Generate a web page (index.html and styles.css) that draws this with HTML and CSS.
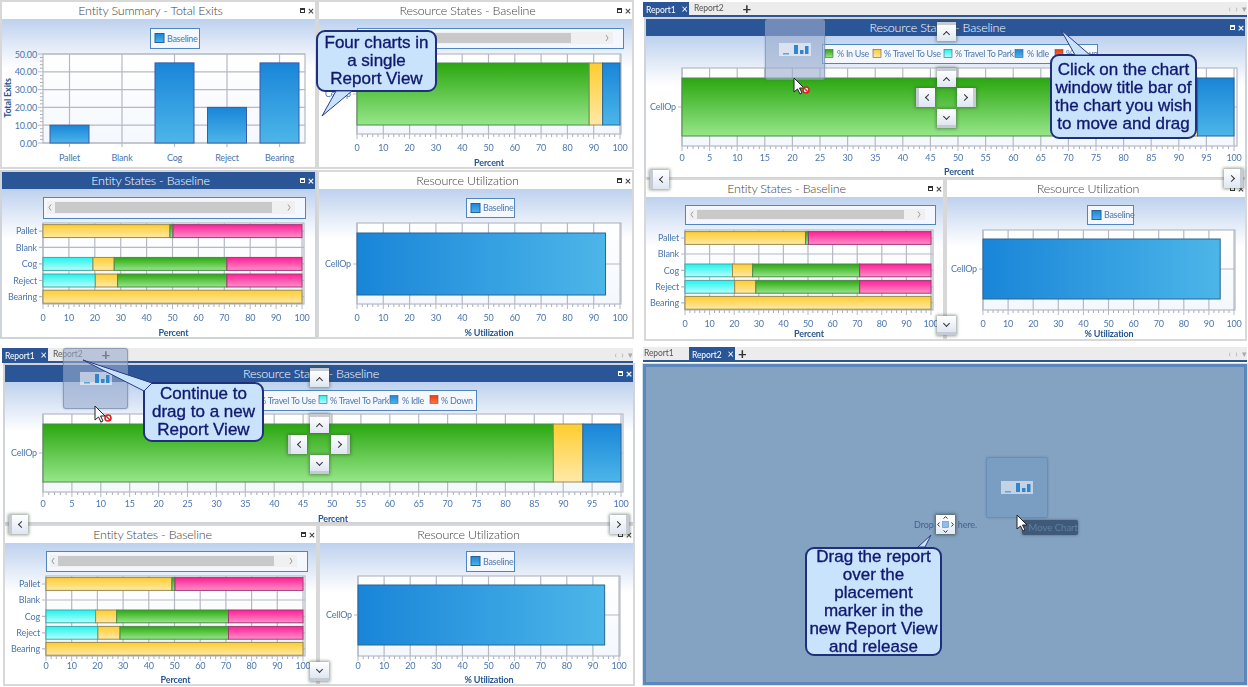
FILE: index.html
```html
<!DOCTYPE html>
<html lang="en">
<head>
  <meta charset="UTF-8" />
  <title>Moving a chart to a new Report View</title>
  <link rel="stylesheet" href="styles.css">
</head>
<body>
  <main class="sheet">

    <div class="quad quad-a">
      <section class="panel">
        <header class="panel-title">Entity Summary - Total Exits<span class="panel-btns"><i class="pin"></i><b>×</b></span></header>
        <div class="panel-body" data-chart="summary"></div>
      </section>
      <section class="panel">
        <header class="panel-title">Resource States - Baseline<span class="panel-btns"><i class="pin"></i><b>×</b></span></header>
        <div class="panel-body" data-chart="resA"></div>
      </section>
      <section class="panel active">
        <header class="panel-title">Entity States - Baseline<span class="panel-btns"><i class="pin"></i><b>×</b></span></header>
        <div class="panel-body" data-chart="entA"></div>
      </section>
      <section class="panel">
        <header class="panel-title">Resource Utilization<span class="panel-btns"><i class="pin"></i><b>×</b></span></header>
        <div class="panel-body" data-chart="utilA"></div>
      </section>
    </div>

    <div class="quad quad-b">
      <nav class="tabs">
        <span class="tab current">Report1<b>×</b></span>
        <span class="tab">Report2</span>
        <span class="tab-add">+</span>
        <span class="tab-arrows">‹ &nbsp;› &nbsp;▾</span>
      </nav>
      <div class="views">
        <section class="panel active wide">
          <header class="panel-title">Resource States - Baseline<span class="panel-btns"><i class="pin"></i><b>×</b></span></header>
          <div class="panel-body" data-chart="resB"></div>
        </section>
        <section class="panel">
          <header class="panel-title">Entity States - Baseline<span class="panel-btns"><i class="pin"></i><b>×</b></span></header>
          <div class="panel-body" data-chart="entB"></div>
        </section>
        <section class="panel">
          <header class="panel-title">Resource Utilization<span class="panel-btns"><i class="pin"></i><b>×</b></span></header>
          <div class="panel-body" data-chart="utilB"></div>
        </section>
      </div>
    </div>

    <div class="quad quad-c">
      <nav class="tabs">
        <span class="tab current">Report1<b>×</b></span>
        <span class="tab">Report2</span>
        <span class="tab-add">+</span>
        <span class="tab-arrows">‹ &nbsp;› &nbsp;▾</span>
      </nav>
      <div class="views">
        <section class="panel active wide">
          <header class="panel-title">Resource States - Baseline<span class="panel-btns"><i class="pin"></i><b>×</b></span></header>
          <div class="panel-body" data-chart="resC"></div>
        </section>
        <section class="panel">
          <header class="panel-title">Entity States - Baseline<span class="panel-btns"><i class="pin"></i><b>×</b></span></header>
          <div class="panel-body" data-chart="entC"></div>
        </section>
        <section class="panel">
          <header class="panel-title">Resource Utilization<span class="panel-btns"><i class="pin"></i><b>×</b></span></header>
          <div class="panel-body" data-chart="utilC"></div>
        </section>
      </div>
    </div>

    <div class="quad quad-d">
      <nav class="tabs">
        <span class="tab plain">Report1</span>
        <span class="tab current">Report2<b>×</b></span>
        <span class="tab-add">+</span>
        <span class="tab-arrows">‹ &nbsp;› &nbsp;▾</span>
      </nav>
      <div class="drop-area"></div>
    </div>

    <!-- things floating over the reports, in page coordinates -->
    <div class="dock up d1"></div>
    <div class="dock up d2"></div>
    <div class="dock left d3"></div>
    <div class="dock right d4"></div>
    <div class="dock down d5"></div>
    <div class="dock down d6"></div>
    <div class="dock left d7"></div>
    <div class="dock right d8"></div>

    <div class="dock up e1"></div>
    <div class="dock up e2"></div>
    <div class="dock left e3"></div>
    <div class="dock right e4"></div>
    <div class="dock down e5"></div>
    <div class="dock down e6"></div>
    <div class="dock left e7"></div>
    <div class="dock right e8"></div>

    <div class="ghost ghost-b" data-thumb></div>
    <div class="ghost ghost-c" data-thumb></div>
    <div class="ghost ghost-d" data-thumb></div>

    <span class="drop-text">Drop chart here.</span>
    <div class="drop-mark">
      <svg viewBox="0 0 19 19" width="19" height="19">
        <rect x="6.5" y="6.5" width="6" height="6" fill="#8fbdf0" stroke="#5b87c0" stroke-width=".6"/>
        <path d="M7.5 3.5l2-1.8 2 1.8M7.5 15.500l2 1.800 2-1.800M3.500 7.500l-1.800 2 1.800 2M15.500 7.500l1.800 2-1.800 2" fill="none" stroke="#333" stroke-width="1"/>
      </svg>
    </div>
    <div class="move-tip">
      <svg viewBox="0 0 8 8" width="8" height="8"><circle cx="4" cy="4" r="4" fill="#2f6fc4"/><path d="M1.500 4h4M4 2l2 2-2 2" fill="none" stroke="#cfe0f5" stroke-width="1"/></svg>
      Move Chart
    </div>

    <svg class="pointer p-b" viewBox="0 0 12 18" width="12" height="18"><path d="M1 1v14l3.500-3 2.500 5 2-1-2.500-5H11z" fill="#fff" stroke="#222" stroke-width="1"/></svg>
    <svg class="pointer p-c" viewBox="0 0 12 18" width="12" height="18"><path d="M1 1v14l3.500-3 2.500 5 2-1-2.500-5H11z" fill="#fff" stroke="#222" stroke-width="1"/></svg>
    <svg class="pointer p-d" viewBox="0 0 12 18" width="12" height="18"><path d="M1 1v14l3.500-3 2.500 5 2-1-2.500-5H11z" fill="#fff" stroke="#222" stroke-width="1"/></svg>
    <svg class="nodrop n-b" viewBox="0 0 8 8" width="8" height="8"><circle cx="4" cy="4" r="3" fill="#fff" stroke="#d22" stroke-width="1.600"/><path d="M2 2l4 4" stroke="#d22" stroke-width="1.400"/></svg>
    <svg class="nodrop n-c" viewBox="0 0 8 8" width="8" height="8"><circle cx="4" cy="4" r="3" fill="#fff" stroke="#d22" stroke-width="1.600"/><path d="M2 2l4 4" stroke="#d22" stroke-width="1.400"/></svg>

    <div class="callout c-four">Four charts in<br>a single<br>Report View</div>
    <div class="callout c-click">Click on the chart<br>window title bar of<br>the chart you wish<br>to move and drag</div>
    <div class="callout c-drag">Continue to<br>drag to a new<br>Report View</div>
    <div class="callout c-drop">Drag the report<br>over the<br>placement<br>marker in the<br>new Report View<br>and release</div>

    <svg class="tails" viewBox="0 0 1248 687" width="1248" height="687">
      <g>
        <path d="M336 91L322 116L352 91z"/>
        <path d="M1075 55L1061 30L1090 55z"/>
        <path d="M144 391L83 360L152 383z"/>
        <path d="M918 547L931 535L925 547z"/>
      </g>
    </svg>
  </main>

  <script src="app.js"></script>
</body>
</html>
```

FILE: styles.css
```css
html, body {
  margin: 0;
  padding: 0;
  background: #fff;
}
.sheet {
  position: relative;
  width: 1248px;
  height: 687px;
  overflow: hidden;
  display: grid;
  grid-template-columns: 640px 608px;
  grid-template-rows: 345px 342px;
  font-family: Lato, "Open Sans", sans-serif;
  filter: blur(0.3px);
}
.quad {
  box-sizing: border-box;
  min-width: 0;
  min-height: 0;
}
.quad-a {
  padding: 2px 0 0 2px;
  display: grid;
  grid-template-columns: 313px 313px;
  grid-template-rows: 165px 165px;
  column-gap: 4px;
  row-gap: 5px;
}
.quad-b {
  padding: 2px 1px 0 3px;
}
.quad-b .views {
  margin: 2px 2px 0 3px;
  display: grid;
  grid-template-columns: 297px 298px;
  grid-template-rows: 158px 159px;
  column-gap: 4px;
  row-gap: 3px;
}
.quad-c {
  padding: 3px 7px 0 2px;
}
.quad-c .views {
  margin: 2px 0 0 3px;
  display: grid;
  grid-template-columns: 311px 313px;
  grid-template-rows: 157px 158px;
  column-gap: 4px;
  row-gap: 4px;
}
.quad-d {
  padding: 2px 1px 0 3px;
}
.wide {
  grid-column: 1 / 3;
}

/* chart windows */
.panel {
  outline: 2px solid #d8d8d8;
  background: #fff;
  display: flex;
  flex-direction: column;
  min-width: 0;
  min-height: 0;
}
.panel-title {
  position: relative;
  flex: none;
  box-sizing: border-box;
  height: 17px;
  padding-right: 16px;
  line-height: 17px;
  text-align: center;
  font-size: 12.5px;
  letter-spacing: -0.2px;
  font-weight: 300;
  color: #444;
  background: #fff;
}
.panel.active {
  outline-color: #cfd3da;
}
.panel.active .panel-title {
  background: #2a5698;
  color: #fff;
}
.panel-btns {
  position: absolute;
  right: 1px;
  top: 0;
  height: 17px;
  display: flex;
  align-items: center;
  gap: 3px;
}
.panel-btns b {
  font-size: 11px;
  line-height: 11px;
  font-weight: 700;
}
.panel-btns .pin {
  display: block;
  box-sizing: border-box;
  width: 5px;
  height: 5px;
  border: 1px solid #333;
  border-top-width: 2px;
}
.panel.active .panel-btns .pin {
  border-color: #fff;
}
.panel-body {
  flex: 1;
  min-height: 0;
  background: linear-gradient(#bdd1ee, #eef3fb 36px, #fff 50px, #fff);
}
.panel-body svg {
  display: block;
  width: 100%;
  height: 100%;
}
.panel-body text {
  font-family: Lato, "Open Sans", sans-serif;
  font-size: 9px;
  letter-spacing: -0.15px;
  fill: #4a76ad;
}
.panel-body text.ax-title {
  font-weight: 700;
  fill: #26558f;
}
.panel-body text.legend-text {
  letter-spacing: -0.3px;
  fill: #4f78ab;
}

/* report tabs */
.tabs {
  position: relative;
  height: 13px;
  background: #ececec;
  border-bottom: 2px solid #2a5698;
  display: flex;
  align-items: stretch;
  font-size: 8.5px;
  letter-spacing: -0.1px;
  line-height: 13px;
  color: #555;
}
.tab {
  padding: 0 3px 0 4px;
}
.tab.current {
  box-sizing: border-box;
  width: 46px;
  padding-left: 3px;
  margin-right: 1px;
  background: #2a5698;
  color: #fff;
  white-space: nowrap;
}
.tab.plain {
  width: 36px;
  padding-left: 1px;
  margin-right: 6px;
}
.tab b {
  margin-left: 6px;
  font-size: 11px;
  font-weight: 400;
}
.tab-add {
  margin-left: 16px;
  font-size: 15px;
  font-weight: 700;
  line-height: 12px;
  color: #333;
}
.quad-d .tab-add {
  margin-left: 2px;
}
.tab-arrows {
  position: absolute;
  right: 0;
  top: 0;
  color: #aaa;
  font-size: 9px;
}
.drop-area {
  box-sizing: border-box;
  margin-top: 2px;
  height: 321px;
  background: #84a2c1;
  border: 3px solid #5c87bc;
  box-shadow: 0 0 0 1px #d5e0ee;
}

/* dock arrows */
.dock {
  position: absolute;
  box-sizing: border-box;
  width: 19px;
  height: 19px;
  background: linear-gradient(#fff, #dfe6f2);
  box-shadow: 0 0 3px 1px rgba(60, 80, 60, 0.55);
  border: 0 solid #c5cad3;
  display: flex;
  align-items: center;
  justify-content: center;
}
.dock::after {
  content: "";
  width: 4px;
  height: 4px;
  border: solid #333;
  border-width: 1.5px 0 0 1.5px;
}
.dock.up { border-top-width: 3px; }
.dock.down { border-bottom-width: 3px; }
.dock.left { border-left-width: 3px; }
.dock.right { border-right-width: 3px; }
.dock.up::after { transform: translateY(1px) rotate(45deg); }
.dock.down::after { transform: translateY(-1px) rotate(225deg); }
.dock.left::after { transform: translateX(1px) rotate(-45deg); }
.dock.right::after { transform: translateX(-1px) rotate(135deg); }

.d1 { left: 937px; top: 22px; }
.d2 { left: 937px; top: 68px; }
.d3 { left: 916px; top: 88px; }
.d4 { left: 957px; top: 88px; }
.d5 { left: 937px; top: 109px; }
.d6 { left: 937px; top: 316px; }
.d7 { left: 650px; top: 170px; }
.d8 { left: 1224px; top: 169px; }

.e1 { left: 310px; top: 368px; }
.e2 { left: 310px; top: 414px; }
.e3 { left: 288px; top: 435px; }
.e4 { left: 331px; top: 435px; }
.e5 { left: 310px; top: 455px; }
.e6 { left: 310px; top: 662px; }
.e7 { left: 9px; top: 515px; }
.e8 { left: 610px; top: 515px; }

/* drag preview */
.ghost {
  position: absolute;
  box-sizing: border-box;
  border-radius: 3px;
  display: flex;
  align-items: center;
  justify-content: center;
  box-shadow: 0 0 2px rgba(70, 90, 120, 0.4);
}
.ghost-b {
  left: 765px;
  top: 19px;
  width: 60px;
  height: 61px;
  background: rgba(155, 172, 205, 0.62);
  border: 1px solid rgba(120, 140, 170, 0.6);
}
.ghost-c {
  left: 63px;
  top: 348px;
  width: 65px;
  height: 61px;
  background: rgba(155, 172, 205, 0.6);
  border: 1px solid rgba(110, 130, 160, 0.6);
}
.ghost-d {
  left: 986px;
  top: 457px;
  width: 62px;
  height: 61px;
  background: rgba(110, 150, 195, 0.45);
  border: 1px solid rgba(100, 135, 180, 0.7);
}
.pointer {
  position: absolute;
}
.p-b { left: 793px; top: 77px; }
.p-c { left: 94px; top: 405px; }
.p-d { left: 1016px; top: 514px; }
.nodrop {
  position: absolute;
}
.n-b { left: 802px; top: 86px; }
.n-c { left: 104px; top: 414px; }
.drop-text {
  position: absolute;
  left: 914px;
  top: 518px;
  font-size: 9px;
  letter-spacing: -0.1px;
  line-height: 14px;
  color: #42628f;
}
.drop-mark {
  position: absolute;
  left: 936px;
  top: 515px;
  width: 19px;
  height: 19px;
  background: linear-gradient(#fff, #e4eaf3);
  box-shadow: 0 0 3px 1px rgba(50, 70, 50, 0.7);
}
.drop-mark svg {
  display: block;
}
.move-tip {
  position: absolute;
  left: 1022px;
  top: 520px;
  box-sizing: border-box;
  width: 56px;
  height: 15px;
  padding-left: 3px;
  display: flex;
  align-items: center;
  gap: 2px;
  background: #3f5a79;
  border-radius: 2px;
  box-shadow: 0 0 3px rgba(40, 60, 90, 0.6);
  font-size: 9.5px;
  color: #5f80a3;
  white-space: nowrap;
}

/* callouts */
.callout {
  position: absolute;
  box-sizing: border-box;
  background: #c9e3fd;
  border: 2px solid #1f2f7c;
  border-radius: 9px;
  font-family: "Liberation Sans", Arial, sans-serif;
  font-size: 17px;
  line-height: 18px;
  text-align: center;
  color: #10196f;
  -webkit-text-stroke: 0.35px #10196f;
  white-space: nowrap;
  display: flex;
  align-items: center;
  justify-content: center;
}
.c-four {
  left: 316px;
  top: 30px;
  width: 121px;
  height: 62px;
}
.c-click {
  left: 1050px;
  top: 54px;
  width: 147px;
  height: 85px;
}
.c-drag {
  left: 143px;
  top: 382px;
  width: 121px;
  height: 60px;
}
.c-drop {
  left: 805px;
  top: 547px;
  width: 137px;
  height: 109px;
}
.tails {
  position: absolute;
  left: 0;
  top: 0;
  pointer-events: none;
}
.tails path {
  fill: #c9e3fd;
  stroke: #2a3a86;
  stroke-width: 1;
}
```

FILE: app.js
```js
// chart data and a small svg drawer, coordinates are page pixels

const COL = {
  green: "gGreen", yellow: "gYellow", cyan: "gCyan", blue: "gBlue", pink: "gPink", red: "gRed", util: "gUtil"
};
const EDGE = {
  green: "#4d8a4a", yellow: "#9a8a50", cyan: "#3fa8a8", blue: "#2a6496", pink: "#a03a78", util: "#2a6496"
};

const GRADS = `
<defs>
  <linearGradient id="gGreen" x2="0" y2="1"><stop offset="0" stop-color="#2aa70f"/><stop offset="1" stop-color="#97e68a"/></linearGradient>
  <linearGradient id="gYellow" x2="0" y2="1"><stop offset="0" stop-color="#ffcd2e"/><stop offset="1" stop-color="#ffe9a8"/></linearGradient>
  <linearGradient id="gCyan" x2="0" y2="1"><stop offset="0" stop-color="#22f3ee"/><stop offset="1" stop-color="#b8fdfb"/></linearGradient>
  <linearGradient id="gBlue" x2="0" y2="1"><stop offset="0" stop-color="#1985d8"/><stop offset="1" stop-color="#4cb6e9"/></linearGradient>
  <linearGradient id="gPink" x2="0" y2="1"><stop offset="0" stop-color="#ff1f96"/><stop offset="1" stop-color="#ff90c9"/></linearGradient>
  <linearGradient id="gRed" x2="0" y2="1"><stop offset="0" stop-color="#f03a08"/><stop offset="1" stop-color="#ff7a40"/></linearGradient>
  <linearGradient id="gUtil"><stop offset="0" stop-color="#1985d8"/><stop offset="1" stop-color="#4cb6e9"/></linearGradient>
  <linearGradient id="gPlot" x2="0" y2="1"><stop offset="0" stop-color="#fff"/><stop offset="1" stop-color="#f4f8fd"/></linearGradient>
</defs>`;

const GRID = "#b5b9c4";

function line(x1, y1, x2, y2, color, w) {
  return `<line x1="${x1}" y1="${y1}" x2="${x2}" y2="${y2}" stroke="${color || GRID}" stroke-width="${w || 1.2}"/>`;
}
function text(x, y, s, anchor, cls) {
  return `<text x="${x}" y="${y}" text-anchor="${anchor || "middle"}"${cls ? ` class="${cls}"` : ""}>${s}</text>`;
}
function bar(x, y, w, h, c) {
  return `<rect x="${x}" y="${y}" width="${w}" height="${h}" fill="url(#${COL[c]})" stroke="${EDGE[c]}" stroke-width="1"/>`;
}

function legendBaseline(x, y, w, h) {
  return `<rect x="${x + 0.5}" y="${y + 0.5}" width="${w}" height="${h}" fill="#f4f8fe" stroke="#4f86bf" stroke-width="1"/>` +
    `<rect x="${x + 5}" y="${y + 5.500}" width="9" height="9" fill="url(#gBlue)" stroke="#2a5f9a"/>` +
    text(x + 17, y + h / 2 + 3.500, "Baseline", "start", "legend-text");
}

function legendScroll(x, y, w, h, thumbFrom, thumbTo) {
  return `<rect x="${x + 0.5}" y="${y + 0.5}" width="${w}" height="${h}" fill="#f4f8fe" stroke="#4f86bf" stroke-width="1"/>` +
    `<rect x="${x + 4}" y="${y + 4}" width="${w - 14}" height="${h - 8}" fill="#f0f0f0"/>` +
    `<rect x="${thumbFrom}" y="${y + 5}" width="${thumbTo - thumbFrom}" height="${h - 10}" fill="#c9c9c9"/>` +
    `<path d="M${x + 8} ${y + h / 2 - 3}l-2 3 2 3M${x + w - 17} ${y + h / 2 - 3}l2 3-2 3" fill="none" stroke="#999"/>`;
}

function legendStates(x, y, w, h) {
  const items = [[3, 15, "green", "% In Use"], [51, 62, "yellow", "% Travel To Use"], [122, 133, "cyan", "% Travel To Park"], [193, 205, "blue", "% Idle"], [233, 244, "red", "% Down"]];
  let s = `<rect x="${x + 0.5}" y="${y + 0.5}" width="${w}" height="${h}" fill="#f4f8fe" stroke="#4f86bf" stroke-width="1"/>`;
  items.forEach(it => {
    s += `<rect x="${x + it[0]}" y="${y + 5.500}" width="8" height="8" fill="url(#${COL[it[2]]})" stroke="#557"  stroke-width=".6"/>`;
    s += text(x + it[1], y + h / 2 + 3.500, it[3], "start", "legend-text");
  });
  return s;
}

// horizontal stacked bars against a 0-100 axis
function hChart(c) {
  const [l, t, r, b] = c.plot;
  const x0 = l;
  const x100 = c.full || r;
  const pos = v => x0 + (x100 - x0) * v / 100;
  let s = c.legend || "";
  s += `<rect x="${l}" y="${t}" width="${r - l}" height="${b - t}" fill="url(#gPlot)"/>`;

  for (let v = 0; v <= 100; v += c.step / 5) {
    const major = Math.round(v / c.step * 1000) % 1000 === 0;
    const x = pos(v);
    s += line(x, b, x, b + (major ? 5 : 3), major ? GRID : "#a8acb6", 1);
    if (major) {
      s += line(x, t, x, b);
      s += text(x, c.labelY + 3.500, v);
    }
  }
  c.rows.forEach(row => {
    s += line(l - 4, row.y, r, row.y);
    s += text(l - 6, row.y + 3.300, row.label, "end");
  });
  s += `<rect x="${l}" y="${t}" width="${r - l}" height="${b - t}" fill="none" stroke="${GRID}" stroke-width="1.200"/>`;

  c.rows.forEach(row => {
    let from = 0;
    (row.segs || []).forEach(seg => {
      s += bar(pos(from), row.y - row.h / 2, pos(seg[0]) - pos(from), row.h, seg[1]);
      from = seg[0];
    });
  });
  s += text(c.titleX || (l + r) / 2, c.titleY + 3.500, c.title, "middle", "ax-title");
  return s;
}

// column chart for the summary window
function colChart(c) {
  const [l, t, r, b] = c.plot;
  let s = c.legend;
  s += `<rect x="${l}" y="${t}" width="${r - l}" height="${b - t}" fill="url(#gPlot)"/>`;
  const yOf = v => b - (b - t) * v / 50;
  for (let v = 0; v <= 50; v += 2) {
    const major = v % 10 === 0;
    s += line(l - (major ? 5 : 3), yOf(v), l, yOf(v), major ? GRID : "#a8acb6", 1);
    if (major) {
      s += line(l, yOf(v), r, yOf(v));
      s += text(l - 6, yOf(v) + 3.500, v.toFixed(2), "end");
    }
  }
  c.cols.forEach(col => {
    s += line(col.x, t, col.x, b + 4);
    s += text(col.x, c.labelY + 3.500, col.label);
  });
  s += `<rect x="${l}" y="${t}" width="${r - l}" height="${b - t}" fill="none" stroke="${GRID}" stroke-width="1.200"/>`;
  c.cols.forEach(col => {
    if (col.v) s += `<rect x="${col.x - 19.500}" y="${yOf(col.v)}" width="39" height="${b - yOf(col.v)}" fill="url(#gBlue)" stroke="#3d5aa8" stroke-width="1"/>`;
  });
  s += `<text x="0" y="0" transform="translate(11 98) rotate(-90)" text-anchor="middle" class="ax-title">Total Exits</text>`;
  return s;
}

function entity(plot, labelY, titleY, legend) {
  const [, t, r, b] = plot;
  const h = b - t;
  const Y = f => t + h * f;
  const bh = h * 0.16;
  return {
    kind: "h", plot, full: r - 2, step: 10, labelY, titleY, title: "Percent", legend,
    rows: [
      { label: "Pallet", y: Y(0.1), h: bh, segs: [[49, "yellow"], [50.200, "green"], [100, "pink"]] },
      { label: "Blank", y: Y(0.3), h: bh },
      { label: "Cog", y: Y(0.505), h: bh, segs: [[19.300, "cyan"], [27.500, "yellow"], [71, "green"], [100, "pink"]] },
      { label: "Reject", y: Y(0.71), h: bh, segs: [[20.200, "cyan"], [28.800, "yellow"], [71, "green"], [100, "pink"]] },
      { label: "Bearing", y: Y(0.91), h: bh, segs: [[100, "yellow"]] }
    ]
  };
}

function resource(plot, full, barTop, barBot, labelY, titleY, step, legend, titleX) {
  return {
    kind: "h", plot, full, step, labelY, titleY, title: "Percent", legend, titleX,
    rows: [{ label: "CellOp", y: (barTop + barBot) / 2, h: barBot - barTop, segs: [[88.300, "green"], [93.400, "yellow"], [100, "blue"]] }]
  };
}

function util(plot, barTop, barBot, labelY, titleY, legend) {
  return {
    kind: "h", plot, full: plot[2] - 1, step: 10, labelY, titleY, title: "% Utilization", legend,
    rows: [{ label: "CellOp", y: (barTop + barBot) / 2, h: barBot - barTop, segs: [[94.500, "util"]] }]
  };
}

const CHARTS = {
  summary: {
    kind: "col", plot: [43, 54, 305, 143], labelY: 157,
    legend: legendBaseline(150, 28, 49, 20),
    cols: [
      { label: "Pallet", x: 69.500, v: 10 }, { label: "Blank", x: 122, v: 0 }, { label: "Cog", x: 174.500, v: 45 },
      { label: "Reject", x: 227, v: 20 }, { label: "Bearing", x: 279.500, v: 45 }
    ]
  },
  resA: resource([357, 54, 621, 134], 620, 63, 125, 147, 162, 10, legendScroll(357, 28, 266, 20, 420, 571)),
  entA: entity([43, 223, 304, 304], 317, 332, legendScroll(43, 197, 262, 21, 55, 272)),
  utilA: util([357, 223, 621, 304], 233, 295, 317, 332, legendBaseline(466, 198, 48, 19)),

  resB: resource([682, 68, 1237, 146], 1234, 78, 136, 157, 171, 5, legendStates(822, 44, 275, 19), 959),
  entB: entity([685, 230, 933, 310], 323, 333, legendScroll(685, 205, 250, 19, 697, 904)),
  utilB: util([983, 230, 1235, 310], 239, 299, 323, 333, legendBaseline(1087, 205, 46, 19)),

  resC: resource([43, 414, 623, 492], 621, 424, 482, 503, 518, 5, legendStates(197, 390, 279, 20), 333),
  entC: entity([46, 576, 305, 656], 665, 679, legendScroll(46, 551, 261, 20, 58, 274)),
  utilC: util([358, 576, 620, 656], 585, 645, 665, 679, legendBaseline(466, 551, 48, 20))
};

document.querySelectorAll("[data-chart]").forEach(el => {
  const box = el.getBoundingClientRect();
  const c = CHARTS[el.dataset.chart];
  const body = c.kind === "col" ? colChart(c) : hChart(c);
  el.innerHTML = `<svg viewBox="${box.left} ${box.top} ${box.width} ${box.height}">${GRADS}${body}</svg>`;
});

// little chart picture inside the drag previews
document.querySelectorAll("[data-thumb]").forEach(el => {
  el.innerHTML = `<svg viewBox="0 0 32 13" width="32" height="13">
    <rect width="32" height="13" fill="#fff" opacity=".55"/>
    <rect x="4" y="10" width="6" height="1.500" fill="#5aa6de"/>
    <rect x="15" y="2" width="4" height="9" fill="#2f86cf"/>
    <rect x="21" y="7" width="3.500" height="4" fill="#2f86cf"/>
    <rect x="26" y="3" width="3.500" height="8" fill="#2f86cf"/>
  </svg>`;
});
```
